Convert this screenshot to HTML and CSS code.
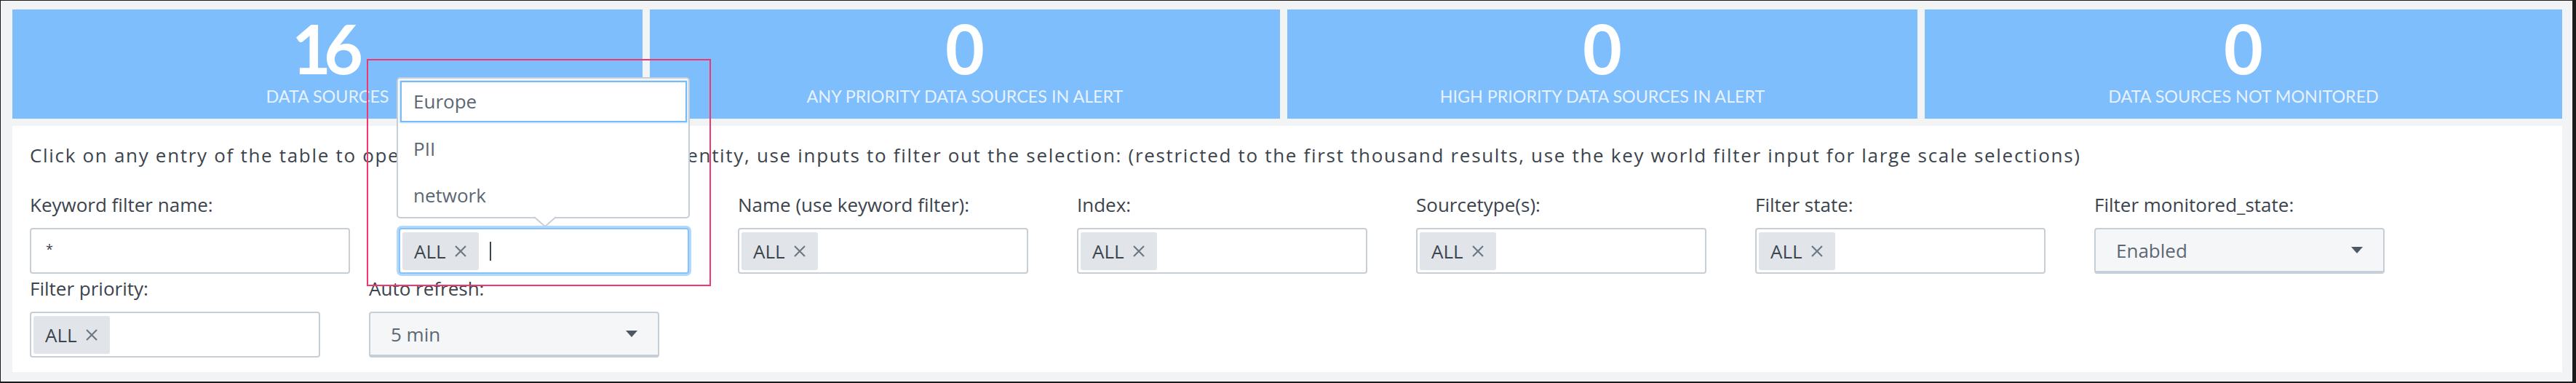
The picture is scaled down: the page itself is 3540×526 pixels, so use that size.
FILE: index.html
```html
<!DOCTYPE html>
<html lang="en">
<head>
<meta charset="utf-8">
<title>Data sources</title>
<link rel="stylesheet" href="styles.css">
</head>
<body>
<div class="frame">
  <div class="stats">
    <div class="cell"><div class="stat"><div class="num"><span>16</span></div><div class="cap">DATA SOURCES</div></div></div>
    <div class="cell"><div class="stat"><div class="num"><span>0</span></div><div class="cap">ANY PRIORITY DATA SOURCES IN ALERT</div></div></div>
    <div class="cell"><div class="stat"><div class="num"><span>0</span></div><div class="cap">HIGH PRIORITY DATA SOURCES IN ALERT</div></div></div>
    <div class="cell"><div class="stat"><div class="num"><span>0</span></div><div class="cap">DATA SOURCES NOT MONITORED</div></div></div>
  </div>
  <div class="panel">
    <p class="intro">Click on any entry of the table to open the data source UI for this entity, use inputs to filter out the selection: (restricted to the first thousand results, use the key world filter input for large scale selections)</p>
    <div class="fields">
      <div class="field wide">
        <label class="lbl">Keyword filter name:</label>
        <div class="box text">*</div>
      </div>
      <div class="field">
        <label class="lbl">&nbsp;</label>
        <div class="box multi focus">
          <span class="chip">ALL <svg class="x" viewBox="0 0 18 18" width="18" height="18"><path d="M2 2 L16 16 M16 2 L2 16"/></svg></span>
          <span class="caret"></span>
          <div class="popup">
            <div class="item active">Europe</div>
            <div class="item">PII</div>
            <div class="item">network</div>
            <svg class="pointer" viewBox="0 0 30 16" width="30" height="16"><polygon points="0,0 15,14 30,0" fill="#fff"/><polyline points="0,1 15,14 30,1" fill="none" stroke="#c6ced7" stroke-width="2"/></svg>
          </div>
        </div>
      </div>
      <div class="field">
        <label class="lbl">Name (use keyword filter):</label>
        <div class="box multi"><span class="chip">ALL <svg class="x" viewBox="0 0 18 18" width="18" height="18"><path d="M2 2 L16 16 M16 2 L2 16"/></svg></span></div>
      </div>
      <div class="field">
        <label class="lbl">Index:</label>
        <div class="box multi"><span class="chip">ALL <svg class="x" viewBox="0 0 18 18" width="18" height="18"><path d="M2 2 L16 16 M16 2 L2 16"/></svg></span></div>
      </div>
      <div class="field">
        <label class="lbl">Sourcetype(s):</label>
        <div class="box multi"><span class="chip">ALL <svg class="x" viewBox="0 0 18 18" width="18" height="18"><path d="M2 2 L16 16 M16 2 L2 16"/></svg></span></div>
      </div>
      <div class="field">
        <label class="lbl">Filter state:</label>
        <div class="box multi"><span class="chip">ALL <svg class="x" viewBox="0 0 18 18" width="18" height="18"><path d="M2 2 L16 16 M16 2 L2 16"/></svg></span></div>
      </div>
      <div class="field">
        <label class="lbl">Filter monitored_state:</label>
        <div class="box select"><span>Enabled</span><span class="arrow"></span></div>
      </div>
      <div class="field">
        <label class="lbl">Filter priority:</label>
        <div class="box multi"><span class="chip">ALL <svg class="x" viewBox="0 0 18 18" width="18" height="18"><path d="M2 2 L16 16 M16 2 L2 16"/></svg></span></div>
      </div>
      <div class="field">
        <label class="lbl">Auto refresh:</label>
        <div class="box select"><span>5 min</span><span class="arrow"></span></div>
      </div>
    </div>
  </div>
  <div class="annot"></div>
</div>
</body>
</html>
```

FILE: styles.css
```css
* { box-sizing: border-box; }
html, body { margin: 0; padding: 0; background: #1b1b1b; }
body { font-family: "Open Sans", Lato, sans-serif; color: #3c444d; }

.frame {
  position: relative;
  width: 3540px;
  height: 526px;
  background: #f2f3f4;
  border-style: solid;
  border-color: #1b1b1b;
  border-width: 1px 5px 2px 1px;
  padding: 12px 14px 13px 16px;
}

.stats { display: flex; height: 150px; }
.cell { flex: 0 0 25%; padding-right: 10px; }
.cell:last-child { padding-right: 0; }
.stat {
  height: 100%;
  background: #7fbefd;
  text-align: center;
  padding-top: 6.5px;
}
.num {
  font-family: Lato, "Open Sans", sans-serif;
  font-size: 93px;
  line-height: 93px;
  font-weight: 700;
  color: #ffffff;
}
.num span { letter-spacing: -10px; padding-right: 10px; }
.cap {
  margin-top: 7px;
  font-family: Lato, "Open Sans", sans-serif;
  font-size: 23.3px;
  line-height: 24px;
  color: rgba(255, 255, 255, 0.82);
}

.panel {
  margin-top: 10px;
  height: 338px;
  background: #ffffff;
  padding: 24px 24px 20px 24px;
}
.intro {
  margin: 0 0 36px 0;
  font-size: 26px;
  line-height: 32px;
  letter-spacing: 1.69px;
  white-space: nowrap;
}

.fields {
  display: flex;
  flex-wrap: wrap;
  column-gap: 67px;
  row-gap: 4px;
}
.field { width: 399px; }
.field.wide { width: 440px; }
.lbl {
  display: block;
  font-size: 26px;
  line-height: 32px;
  margin-bottom: 16px;
  white-space: nowrap;
}

.box {
  position: relative;
  height: 63px;
  border: 2px solid #c6ced7;
  border-radius: 4px;
  background: #ffffff;
  font-size: 26px;
  display: flex;
  align-items: center;
}
.box.text { padding-left: 20px; padding-bottom: 6px; font-size: 18px; }
.box.multi { padding: 0 3px; }
.box.focus {
  border-color: #86c3fa;
  box-shadow: 0 0 0 3px rgba(128, 190, 253, 0.6);
}
.chip {
  height: 52px;
  background: #e1e5e9;
  border-radius: 3px;
  padding: 0 16px;
  display: inline-flex;
  align-items: center;
  gap: 11px;
  color: #3c444d;
}
.x { stroke: #6d7884; stroke-width: 2.2; fill: none; }
.caret {
  width: 2px;
  height: 26px;
  background: #3c444d;
  margin-left: 15px;
}

.box.select {
  background: #f5f6f8;
  border-bottom-width: 4px;
  padding: 0 28px 0 28px;
  justify-content: space-between;
  color: #5c6773;
}
.arrow {
  width: 0;
  height: 0;
  border-left: 8px solid transparent;
  border-right: 8px solid transparent;
  border-top: 9px solid #4e5864;
}

.popup {
  position: absolute;
  left: -5px;
  bottom: calc(100% + 15px);
  width: 403px;
  background: #ffffff;
  border: 2px solid #c6ced7;
  border-radius: 5px;
  padding: 3px 2px 1px 3px;
  z-index: 5;
}
.item {
  height: 57px;
  line-height: 52px;
  padding: 0 0 5px 16px;
  border: 2px solid transparent;
  color: #5c6773;
  font-size: 26px;
}
.item + .item { margin-top: 7.5px; }
.item.active {
  border-color: #77bbf8;
  box-shadow: 0 0 2px 1px rgba(119, 187, 248, 0.45);
}
.pointer {
  position: absolute;
  left: 187px;
  top: calc(100% - 1px);
}

.annot {
  position: absolute;
  left: 503px;
  top: 80px;
  width: 473px;
  height: 312px;
  border: 2px solid #f2366e;
  z-index: 10;
  pointer-events: none;
}
```
